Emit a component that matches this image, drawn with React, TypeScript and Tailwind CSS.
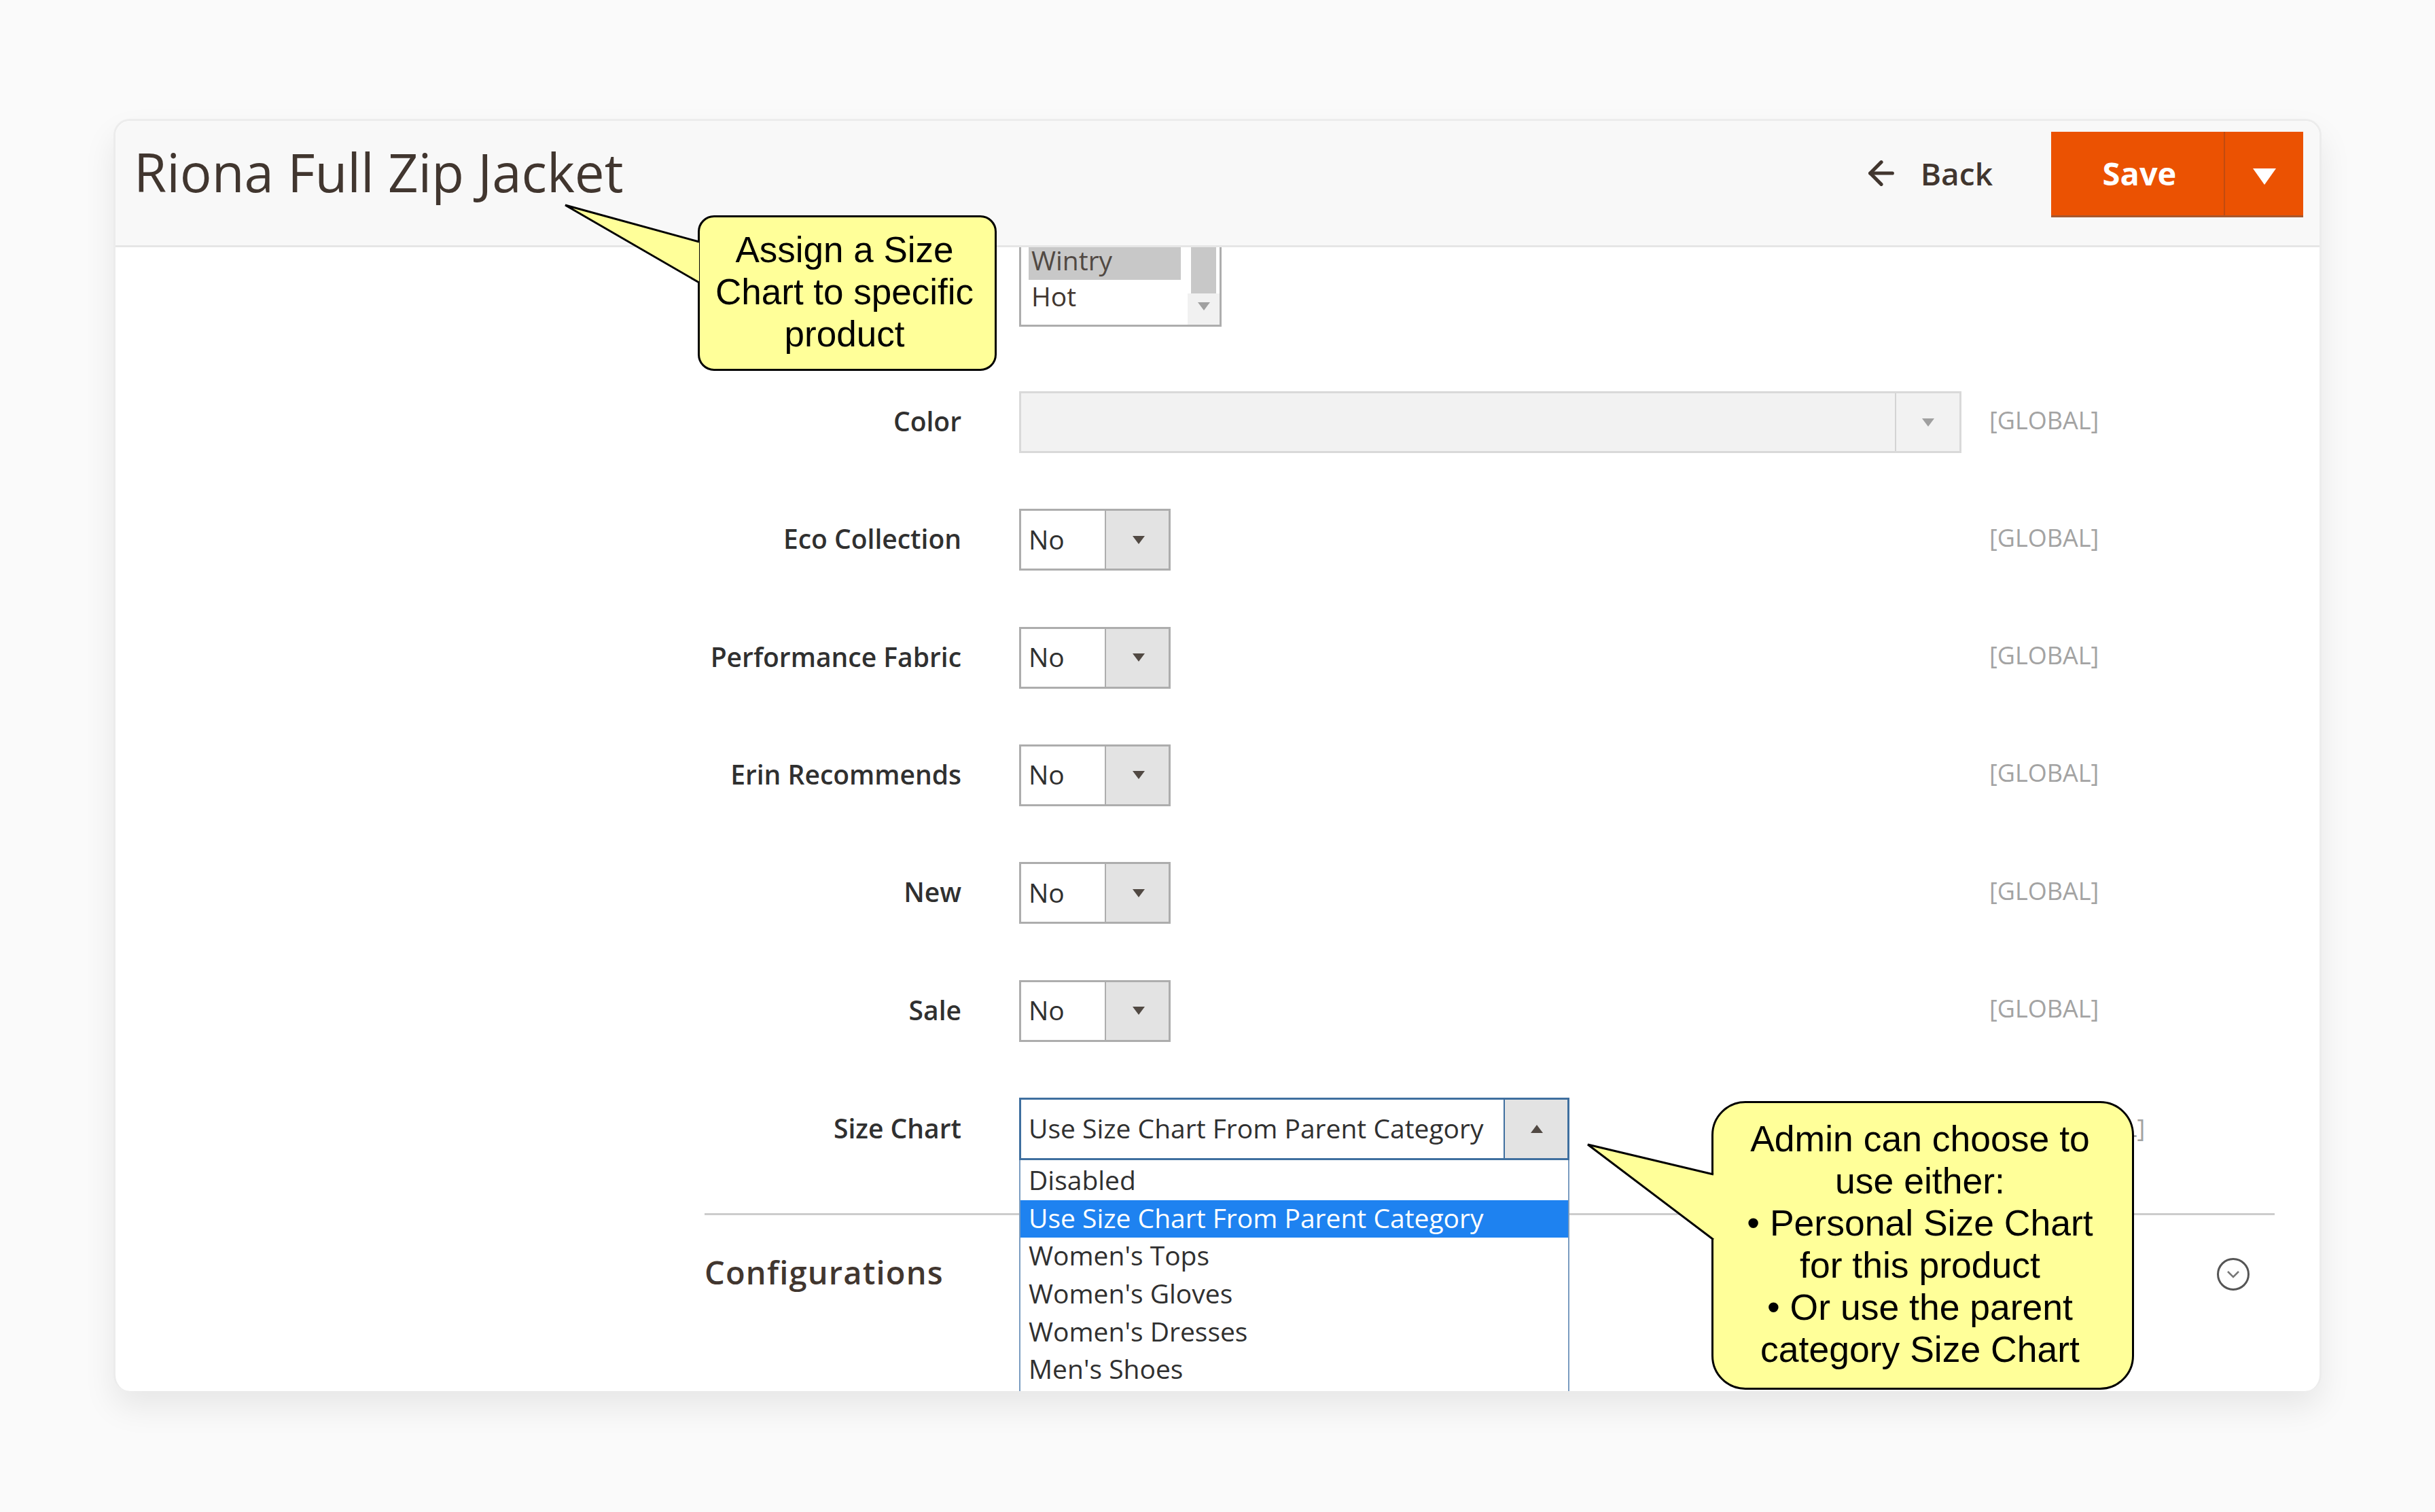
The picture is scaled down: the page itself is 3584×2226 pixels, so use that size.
import { ArrowLeft } from "lucide-react";

const open = "font-['Open_Sans',sans-serif]";

function Tri({ up, color }: { up?: boolean; color: string }) {
  return (
    <svg width="20" height="14" viewBox="0 0 20 14">
      <path d={up ? "M10 1 L19 13 L1 13 Z" : "M1 1 L19 1 L10 13 Z"} fill={color} />
    </svg>
  );
}

function Scope({ className = "" }: { className?: string }) {
  return <span className={`text-[36px] leading-none text-[#a3a3a3] ${className}`}>[GLOBAL]</span>;
}

function Label({ text }: { text: string }) {
  return (
    <div className="w-[1330px] shrink-0 -translate-y-[1px] pr-[85px] text-right text-[39px] font-semibold leading-tight text-[#303030]">
      {text}
    </div>
  );
}

function YesNoRow({ label }: { label: string }) {
  return (
    <div className="flex h-[91px] items-center">
      <Label text={label} />
      <div className="flex h-[91px] w-[223px] border-[3px] border-[#adadad] bg-white">
        <div className="flex flex-1 -translate-y-[1px] items-center pl-[11px] text-[39px] text-[#303030]">No</div>
        <div className="flex w-[94px] items-center justify-center border-l-2 border-[#adadad] bg-[#e3e3e3] pl-[3px]">
          <Tri color="#514943" />
        </div>
      </div>
      <Scope className="ml-[1205px] -translate-y-[3px]" />
    </div>
  );
}

export default function App() {
  return (
    <div className={`h-[2226px] w-[3584px] overflow-hidden bg-[#fafafa] pl-[167px] pt-[175px] ${open}`}>
      <div className="relative h-[1873px] w-[3250px] rounded-[24px] border-[3px] border-b-0 border-[#ececec] bg-white shadow-[0_24px_48px_rgba(0,0,0,0.08)]">
        {/* header */}
        <div className="flex h-[186px] items-center justify-between rounded-t-[22px] border-b-[3px] border-[#e6e6e6] bg-[#f8f8f8] pb-[25px] pl-[27px] pr-[24px]">
          <h1 className="-translate-y-[3px] text-[78px] font-normal leading-tight text-[#41362f]">Riona Full Zip Jacket</h1>
          <div className="flex items-center">
            <div className="mr-[86px] flex -translate-y-[2px] items-center gap-[30px] text-[#41362f]">
              <ArrowLeft size={56} strokeWidth={2.2} />
              <span className="text-[46px] font-semibold">Back</span>
            </div>
            <div className="flex h-[126px] w-[371px] border-b-[3px] border-[#a8582e] bg-[#eb5202] text-white">
              <div className="flex flex-1 items-center justify-center border-r-2 border-[#c04a10] pl-[6px] text-[47px] font-bold">
                Save
              </div>
              <div className="flex w-[115px] translate-y-[4px] items-center justify-center">
                <svg width="34" height="24" viewBox="0 0 34 24">
                  <path d="M0 0 H34 L17 24 Z" fill="#fff" />
                </svg>
              </div>
            </div>
          </div>
        </div>

        {/* form */}
        <div className="relative h-[1684px] overflow-hidden">
          <div className="ml-[1330px] flex h-[117px] w-[298px] border-[3px] border-t-0 border-[#adadad] text-[39px] leading-tight text-[#514943]">
            <div className="flex-1 pl-[11px]">
              <div className="flex h-[48px] w-[224px] items-center bg-[#c8c8c8] pb-[10px] pl-[4px]">Wintry</div>
              <div className="flex h-[56px] items-center pb-[8px] pl-[4px] text-[#41362f]">Hot</div>
            </div>
            <div className="flex w-[47px] flex-col items-center">
              <div className="h-[68px] w-[37px] bg-[#c8c8c8]" />
              <div className="flex w-full flex-1 items-start justify-center bg-[#f1f1f1] pt-[12px]">
                <Tri color="#a0a0a0" />
              </div>
            </div>
          </div>

          <div className="mt-[95px] flex flex-col gap-[82.33px]">
            <div className="flex h-[91px] items-center">
              <Label text="Color" />
              <div className="flex h-[91px] w-[1387px] border-[3px] border-[#d9d9d9] bg-[#f2f2f2]">
                <div className="flex-1 border-r-2 border-[#d4d4d4]" />
                <div className="flex w-[93px] items-center justify-center">
                  <Tri color="#a0a0a0" />
                </div>
              </div>
              <Scope className="ml-[41px] -translate-y-[3px]" />
            </div>
            {["Eco Collection", "Performance Fabric", "Erin Recommends", "New", "Sale"].map((l) => (
              <YesNoRow key={l} label={l} />
            ))}
            <div className="flex h-[92px] items-center">
              <Label text="Size Chart" />
              <div className="relative w-[810px]">
                <div className="flex h-[92px] border-[3px] border-[#3f6f9f] bg-white">
                  <div className="flex flex-1 -translate-y-[1px] items-center pl-[11px] text-[39px] text-[#303030]">
                    Use Size Chart From Parent Category
                  </div>
                  <div className="flex w-[94px] items-center justify-center border-l-2 border-[#3f6f9f] bg-[#e3e3e3] pl-[2px]">
                    <Tri up color="#514943" />
                  </div>
                </div>
                {/* open dropdown */}
                <div className="absolute left-0 top-[92px] z-10 h-[400px] w-full overflow-hidden border-x-[2px] border-[#7a9cc0] bg-white pt-[3px] text-[39px] leading-[55.7px] text-[#303030]">
                  {[
                    "Disabled",
                    "Use Size Chart From Parent Category",
                    "Women's Tops",
                    "Women's Gloves",
                    "Women's Dresses",
                    "Men's Shoes",
                  ].map((o, i) => (
                    <div key={o} className={`pl-[12px] ${i === 1 ? "bg-[#1e82f0] text-white" : ""}`}>
                      <span className="relative -top-[2px]">{o}</span>
                    </div>
                  ))}
                </div>
              </div>
              <Scope className="ml-[686px] -translate-y-[1px]" />
            </div>
          </div>

          {/* configurations section */}
          <div className="ml-[867px] mr-[66px] mt-[78px] flex h-[92px] items-center justify-between border-t-[3px] border-[#cccccc] pt-[86px]">
            <h2 className="-translate-y-[3px] text-[47px] font-semibold tracking-[1.2px] text-[#41362f]">Configurations</h2>
            <div className="mr-[37px] flex h-[48px] w-[48px] items-center justify-center rounded-full border-[3px] border-[#555]">
              <svg width="20" height="12" viewBox="0 0 20 12">
                <path d="M2 2 L10 10 L18 2" fill="none" stroke="#777" strokeWidth="2.5" />
              </svg>
            </div>
          </div>
        </div>

        {/* callout: page title */}
        <div className="absolute left-[857px] top-[139px] z-20 flex h-[229px] w-[440px] items-center justify-center rounded-[24px] border-[3px] border-black bg-[#ffff99] pb-[4px] pr-[8px] text-center font-['Liberation_Sans',sans-serif] text-[53px] leading-[62px] text-black">
          Assign a Size
          <br />
          Chart to specific
          <br />
          product
        </div>
        <svg className="absolute left-[660px] top-[122px] z-30" width="204" height="120" viewBox="0 0 204 120">
          <path d="M2 2 L199 56 L199 116 Z" fill="#ffff99" />
          <path d="M199 56 L2 2 L199 116" fill="none" stroke="#000" strokeWidth="3" />
        </svg>

        {/* callout: size chart */}
        <div className="absolute left-[2349px] top-[1443px] z-20 flex h-[425px] w-[622px] items-center justify-center rounded-[50px] border-[3px] border-black bg-[#ffff99] pb-[4px] text-center font-['Liberation_Sans',sans-serif] text-[53.5px] leading-[62px] text-black">
          <div className="-translate-x-[4px]">
            Admin can choose to
            <br />
            use either:
            <br />
            • Personal Size Chart
            <br />
            for this product
            <br />
            • Or use the parent
            <br />
            category Size Chart
          </div>
        </div>
        <svg className="absolute left-[2165px] top-[1505px] z-30" width="192" height="146" viewBox="0 0 192 146">
          <path d="M2 2 L187 46 L187 142 Z" fill="#ffff99" />
          <path d="M187 46 L2 2 L187 142" fill="none" stroke="#000" strokeWidth="3" />
        </svg>
      </div>
    </div>
  );
}
